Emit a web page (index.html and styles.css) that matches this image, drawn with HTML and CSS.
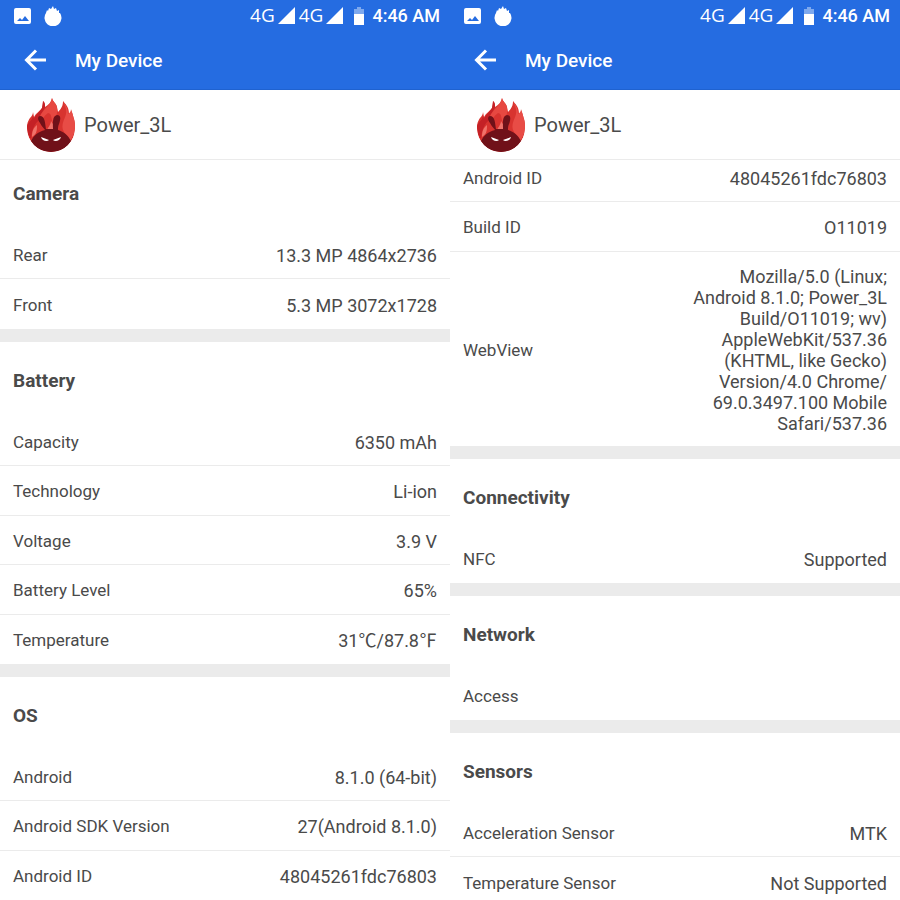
FILE: index.html
```html
<!DOCTYPE html>
<html lang="en">
<head>
<meta charset="utf-8">
<meta name="viewport" content="width=device-width, initial-scale=1">
<title>My Device</title>
<link rel="stylesheet" href="styles.css">
</head>
<body>
<!-- shared icons -->
<svg class="sprite" aria-hidden="true">
	<symbol id="picture" viewBox="0 0 18 18">
		<path fill="#fff" fill-rule="evenodd" d="M2 1h13a2 2 0 0 1 2 2v12a2 2 0 0 1-2 2H2a2 2 0 0 1-2-2V3a2 2 0 0 1 2-2zM3 14h12l-4-5-3 4-2-2z"/>
	</symbol>
	<symbol id="flame" viewBox="0 0 18 20">
		<path fill="#fff" d="M2 7l1-3 1 1 1-3 2 1 2-3 1 3 2-1 1 3 2-1v3l1 0A8.500 8.500 0 1 1 2 7z"/>
	</symbol>
	<symbol id="signal" viewBox="0 0 17 17">
		<path fill="#fff" d="M17 0v17H0z"/>
	</symbol>
	<symbol id="battery" viewBox="0 0 10 18">
		<path fill="#7ea9ee" d="M3 0h4v2h3v6H0V2h3z"/>
		<path fill="#fff" d="M0 7h10v11H0z"/>
	</symbol>
	<symbol id="arrow" viewBox="0 0 22 22">
		<path fill="none" stroke="#fff" stroke-width="3" d="M22 11H3M12 1.500L2.500 11l9.500 9.500"/>
	</symbol>
	<symbol id="logo" viewBox="0 0 48 54">
		<clipPath id="body"><path d="M0 0h48v30a24 24 0 0 1-48 0z"/></clipPath>
		<g clip-path="url(#body)">
			<path fill="#d8332f" d="M0 30c0-5 1-7 3-10 2-2 3-4 3-6l1 5c2-4 6-6 8-9 1-3 1-5 1-7 2 2 2 3 2 6 3-2 6-4 7-9 1 4 4 5 5 9l1 5c4-4 5-7 5-11 2 3 6 5 6 13 2-1 2-2 2-4 2 4 2 7 3 9 1 3 1 6 1 9 0 14-11 24-24 24S0 44 0 30z"/>
			<path fill="#c42126" d="M16 3c2 2 2 3 2 6-1 4-6 8-6 13-4 4-7 8-8 19-3-4-4-8-4-13 2-5 5-5 6-10l1 3c2-5 6-7 8-11z"/>
			<path fill="#e74841" d="M25 0c1 5 5 5 5 10 1 7-2 8-3 15-4-3-1-9-6-10-4 3-6 6-7 10-3-6 0-9 4-14 3-3 6-6 7-11z"/>
			<path fill="#e84c46" d="M36 3c2 4 5 6 5 13 2-1 3-3 3-5 2 7 4 11 4 18 0 5-2 10-5 14l-6-9c-4-7 1-13 2-18s-1-8-3-13z"/>
			<path fill="#f0726a" d="M24 23c2 3 4 6 4 12h-9c1-5 5-8 5-12zM10 27c-4 3-5 7-5 12 5-3 5-7 5-12z"/>
			<path fill="#701119" d="M4 43c3-6 7-9 14-11-1-2-3-3-5-7-3-4-2-7 0-7 5 0 5 7 6 13h7c0-6-1-13 4-14 5 0 3 6 2 9-1 2-1 4-1 6 6 2 10 5 13 11-4 7-11 11-20 11S8 50 4 43z"/>
			<path fill="#fff" d="M14 39l8 3c-2 2-7 1-8-3zm20 0c-1 4-6 5-8 3z"/>
		</g>
	</symbol>
</svg>

<main class="screens">
	<section class="screen">
		<header class="top">
			<div class="status">
				<svg class="picture"><use href="#picture"/></svg>
				<svg class="flame"><use href="#flame"/></svg>
				<span class="network">4G</span>
				<svg class="signal"><use href="#signal"/></svg>
				<span class="network">4G</span>
				<svg class="signal"><use href="#signal"/></svg>
				<svg class="battery"><use href="#battery"/></svg>
				<time class="clock">4:46 AM</time>
			</div>
			<div class="toolbar">
				<button class="back" type="button" aria-label="Back"><svg><use href="#arrow"/></svg></button>
				<h1>My Device</h1>
			</div>
		</header>
		<div class="device">
			<svg class="logo"><use href="#logo"/></svg>
			<span>Power_3L</span>
		</div>
		<div class="scroller">
			<div class="list">
				<section class="group">
					<h2>Camera</h2>
					<dl>
						<div class="row"><dt>Rear</dt><dd>13.3 MP 4864x2736</dd></div>
						<div class="row"><dt>Front</dt><dd>5.3 MP 3072x1728</dd></div>
					</dl>
				</section>
				<section class="group">
					<h2>Battery</h2>
					<dl>
						<div class="row"><dt>Capacity</dt><dd>6350 mAh</dd></div>
						<div class="row"><dt>Technology</dt><dd>Li-ion</dd></div>
						<div class="row"><dt>Voltage</dt><dd>3.9 V</dd></div>
						<div class="row"><dt>Battery Level</dt><dd>65%</dd></div>
						<div class="row"><dt>Temperature</dt><dd>31℃/87.8℉</dd></div>
					</dl>
				</section>
				<section class="group">
					<h2>OS</h2>
					<dl>
						<div class="row"><dt>Android</dt><dd>8.1.0 (64-bit)</dd></div>
						<div class="row"><dt>Android SDK Version</dt><dd>27(Android 8.1.0)</dd></div>
						<div class="row"><dt>Android ID</dt><dd>48045261fdc76803</dd></div>
					</dl>
				</section>
			</div>
		</div>
	</section>

	<section class="screen">
		<header class="top">
			<div class="status">
				<svg class="picture"><use href="#picture"/></svg>
				<svg class="flame"><use href="#flame"/></svg>
				<span class="network">4G</span>
				<svg class="signal"><use href="#signal"/></svg>
				<span class="network">4G</span>
				<svg class="signal"><use href="#signal"/></svg>
				<svg class="battery"><use href="#battery"/></svg>
				<time class="clock">4:46 AM</time>
			</div>
			<div class="toolbar">
				<button class="back" type="button" aria-label="Back"><svg><use href="#arrow"/></svg></button>
				<h1>My Device</h1>
			</div>
		</header>
		<div class="device">
			<svg class="logo"><use href="#logo"/></svg>
			<span>Power_3L</span>
		</div>
		<div class="scroller">
			<div class="list list-continued">
				<section class="group">
					<dl>
						<div class="row"><dt>Android ID</dt><dd>48045261fdc76803</dd></div>
						<div class="row"><dt>Build ID</dt><dd>O11019</dd></div>
						<div class="row"><dt>WebView</dt><dd>Mozilla/5.0 (Linux; Android 8.1.0; Power_3L Build/O11019; wv) AppleWebKit/537.36 (KHTML, like Gecko) Version/4.0 Chrome/<wbr>69.0.3497.100 Mobile Safari/537.36</dd></div>
					</dl>
				</section>
				<section class="group">
					<h2>Connectivity</h2>
					<dl>
						<div class="row"><dt>NFC</dt><dd>Supported</dd></div>
					</dl>
				</section>
				<section class="group">
					<h2>Network</h2>
					<dl>
						<div class="row"><dt>Access</dt><dd></dd></div>
					</dl>
				</section>
				<section class="group">
					<h2>Sensors</h2>
					<dl>
						<div class="row"><dt>Acceleration Sensor</dt><dd>MTK</dd></div>
						<div class="row"><dt>Temperature Sensor</dt><dd>Not Supported</dd></div>
					</dl>
				</section>
			</div>
		</div>
	</section>
</main>
</body>
</html>
```
FILE: styles.css
```css
*{
	margin: 0;
	padding: 0;
	box-sizing: border-box;
}

body{
	font-family: Roboto, "Noto Sans CJK SC", sans-serif;
	font-size: 18px;
	line-height: 21px;
	color: #4a4a4a;
	background-color: white;
}
.sprite{
	position: absolute;
	width: 0;
	height: 0;
}
.screens{
	display: grid;
	grid-template-columns: 1fr 1fr;
	height: 100vh;
}
.screen{
	display: flex;
	flex-direction: column;
	min-width: 0;
	min-height: 0;
}

/* blue header */
.top{
	color: white;
	background-color: #256ce1;
	border-bottom: 1px solid #1f62d0;
}
.status{
	display: flex;
	align-items: center;
	height: 31px;
	padding: 0 10px 0 14px;
}
.picture{
	width: 18px;
	height: 18px;
	margin-right: 12px;
}
.flame{
	width: 18px;
	height: 20px;
	margin-right: auto;
}
.network{
	font-family: "Open Sans", sans-serif;
	font-size: 19px;
	font-weight: 400;
}
.signal{
	width: 17px;
	height: 17px;
	margin: 0 4px 0 3px;
}
.battery{
	width: 10px;
	height: 18px;
	margin: 0 8px 0 7px;
}
.clock{
	font-weight: 500;
}
.toolbar{
	display: flex;
	align-items: center;
	height: 58px;
	padding-left: 24px;
}
.back{
	width: 22px;
	height: 22px;
	margin-right: 29px;
	border: none;
	background: none;
	cursor: pointer;
}
.back svg{
	display: block;
	width: 22px;
	height: 22px;
}
h1{
	font-size: 19px;
	font-weight: 500;
}

.device{
	display: flex;
	align-items: center;
	height: 70px;
	padding-left: 27px;
	font-size: 20px;
	border-bottom: 1px solid #ebebeb;
}
.device span{
	padding-top: 2px;
}
.logo{
	width: 48px;
	height: 54px;
	margin-right: 9px;
}

/* the lists are shown a little scrolled */
.scroller{
	flex: 1;
	min-height: 0;
	overflow: hidden;
}
.list{
	margin-top: -5px;
}
.list-continued{
	margin-top: -7px;
}
.group{
	border-bottom: 13px solid #ebebeb;
}
.group:last-child{
	border-bottom: none;
}
h2{
	height: 75px;
	padding: 28px 13px 0;
	font-size: 19px;
	font-weight: 700;
}
.row{
	display: flex;
	align-items: center;
	justify-content: space-between;
	min-height: 49px;
	padding: 14px 13px 12px;
	border-bottom: 1px solid #ebebeb;
}
.row:nth-child(even){
	min-height: 50px;
}
.row:last-child{
	border-bottom: none;
}
dt{
	font-size: 17px;
}
dd{
	max-width: 200px;
	text-align: right;
}
```
